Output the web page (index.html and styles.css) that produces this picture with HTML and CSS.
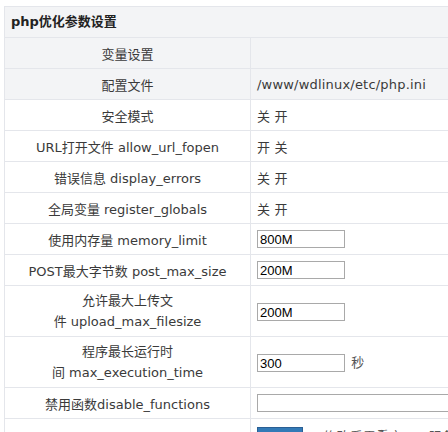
FILE: index.html
```html
<!DOCTYPE html>
<html lang="zh-CN">
  <head>
    <meta charset="utf-8" />
    <title>php优化参数设置</title>
    <link rel="stylesheet" href="styles.css">
  </head>

  <body>
    <div class="panel">
      <div class="panel-title">php优化参数设置</div>
      <table class="opts">
        <tr class="shade">
          <td class="label">变量设置</td>
          <td class="value"></td>
        </tr>
        <tr class="shade">
          <td class="label">配置文件</td>
          <td class="value">/www/wdlinux/etc/php.ini</td>
        </tr>
        <tr>
          <td class="label">安全模式</td>
          <td class="value">关 开</td>
        </tr>
        <tr>
          <td class="label">URL打开文件 allow_url_fopen</td>
          <td class="value">开 关</td>
        </tr>
        <tr>
          <td class="label">错误信息 display_errors</td>
          <td class="value">关 开</td>
        </tr>
        <tr>
          <td class="label">全局变量 register_globals</td>
          <td class="value">关 开</td>
        </tr>
        <tr>
          <td class="label">使用内存量 memory_limit</td>
          <td class="value"><input type="text" class="field" value="800M"></td>
        </tr>
        <tr>
          <td class="label">POST最大字节数 post_max_size</td>
          <td class="value"><input type="text" class="field" value="200M"></td>
        </tr>
        <tr class="tall">
          <td class="label">允许最大上传文<br>件 upload_max_filesize</td>
          <td class="value"><input type="text" class="field" value="200M"></td>
        </tr>
        <tr class="tall">
          <td class="label">程序最长运行时<br>间 max_execution_time</td>
          <td class="value"><input type="text" class="field" value="300"> <span class="unit">秒</span></td>
        </tr>
        <tr>
          <td class="label">禁用函数disable_functions</td>
          <td class="value"><input type="text" class="field wide" value=""></td>
        </tr>
        <tr>
          <td class="label"></td>
          <td class="value"><button class="save">保存</button> <span class="hint">修改后需重启PHP服务生效</span></td>
        </tr>
      </table>
    </div>
  </body>
</html>
```

FILE: styles.css
```css
body {
  margin: 0;
  padding: 6px 0 0 4px;
  font-family: "DejaVu Sans", "Noto Sans CJK SC", sans-serif;
  font-size: 13px;
  color: #3a3a3a;
  overflow: hidden;
}

.panel {
  width: 600px;
  border-top: 1px solid #e4e6eb;
  border-left: 1px solid #e4e6eb;
}

.panel-title {
  height: 30px;
  line-height: 30px;
  padding-left: 6px;
  background: #f3f4f6;
  font-weight: bold;
  font-size: 13px;
  color: #222;
  border-bottom: 1px solid #e4e6eb;
}

.opts {
  width: 100%;
  border-collapse: collapse;
}

.opts td {
  height: 30px;
  padding: 0;
  border-bottom: 1px solid #e4e6eb;
}

.opts tr.tall td {
  height: 50px;
  line-height: 21px;
}

.opts tr.shade td {
  background: #f3f4f6;
}

.opts td.label {
  width: 245px;
  text-align: center;
  border-right: 1px solid #e4e6eb;
}

.opts td.value {
  padding-left: 6px;
  text-align: left;
  letter-spacing: 0.2px;
}

.field {
  width: 82px;
  height: 14px;
  padding: 1px 2px;
  margin: 0;
  border: 1px solid #a9a9a9;
  font-family: "Liberation Sans", sans-serif;
  font-size: 13px;
  letter-spacing: 0;
  color: #000;
  vertical-align: middle;
}

.field.wide {
  width: 300px;
}

.unit {
  margin-left: 2px;
  color: #555;
}

.save {
  margin: 8px 0 0;
  width: 46px;
  height: 24px;
  border: 1px solid #2a5f94;
  background: #337ab7;
  color: #fff;
  font-weight: bold;
  font-size: 12px;
  font-family: "Noto Sans CJK SC", sans-serif;
  vertical-align: top;
}

.hint {
  margin-left: 16px;
  color: #555;
  vertical-align: -10px;
}
```
